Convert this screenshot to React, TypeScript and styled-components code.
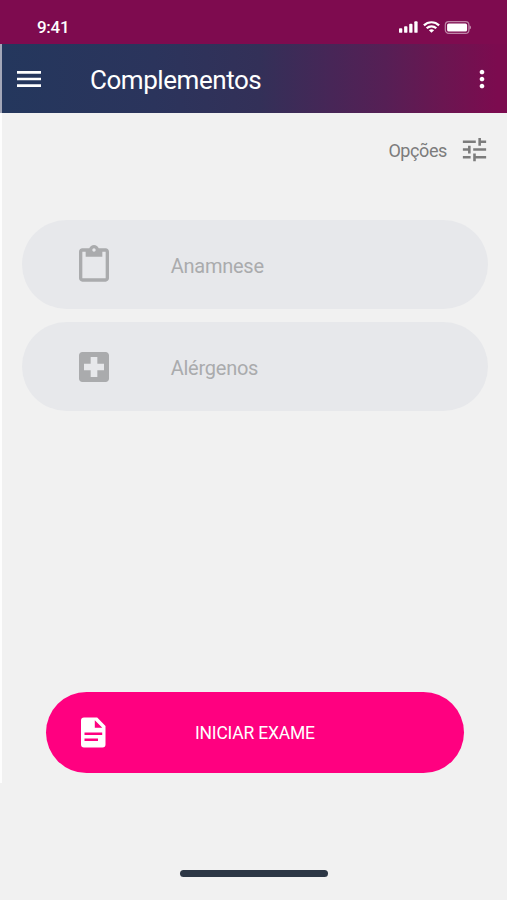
import React from "react";
import styled, { createGlobalStyle } from "styled-components";
import { MdContentPaste, MdLocalHospital, MdMenu, MdMoreVert, MdTune } from "react-icons/md";

const GlobalStyle = createGlobalStyle`
  * { box-sizing: border-box; }
  body { margin: 0; background: #f1f1f1; font-family: Roboto, sans-serif; }
  button { border: 0; padding: 0; background: none; color: inherit; font: inherit; }
  svg { display: block; flex: none; }
`;

const Screen = styled.div`
  display: flex;
  flex-direction: column;
  width: 507px;
  height: 900px;
  background: #f1f1f1;
  overflow: hidden;
`;

const StatusBar = styled.div`
  display: flex;
  align-items: center;
  justify-content: space-between;
  height: 44px;
  padding: 10px 36px 0 37px;
  background: #7e0b4f;
  color: #fff;
`;

const Clock = styled.span`
  font-size: 17px;
  line-height: 20px;
  font-weight: 500;
  letter-spacing: -0.3px;
`;

const StatusIcons = styled.div`
  display: flex;
  align-items: center;
  gap: 4px;
`;

const AppBar = styled.header`
  display: flex;
  align-items: center;
  height: 69px;
  padding: 0 11px;
  border-left: 2px solid #a3a7b8;
  background: linear-gradient(90deg, #24375d 0%, #2b345c 30%, #333058 51%, #472657 65%, #561f55 76%, #6a1651 87%, #7c0b4f 98%);
  color: #fff;
`;

const Title = styled.h1`
  flex: 1;
  margin: 3px 0 0 45px;
  font-size: 26px;
  line-height: 32px;
  font-weight: 400;
  letter-spacing: -0.45px;
`;

const IconButton = styled.button`
  display: flex;
`;

const Content = styled.main`
  display: flex;
  flex-direction: column;
  height: 670px;
  border-left: 2px solid #fdfdfd;
`;

const Options = styled.button`
  display: flex;
  align-items: center;
  align-self: flex-end;
  gap: 12px;
  margin: 21px 17px 0 0;
  color: #7c7c7c;
  font-size: 18px;
  line-height: 22px;
  letter-spacing: -0.4px;
`;

const OptionsLabel = styled.span`
  margin-top: 3px;
`;

const CardList = styled.div`
  display: flex;
  flex-direction: column;
  gap: 13px;
  margin: 55px 19.5px 0 19.7px;
`;

const Card = styled.button`
  display: flex;
  align-items: center;
  height: 89px;
  padding: 0 52px;
  border-radius: 45px;
  background: #e7e8eb;
  color: #aaabad;
  font-size: 20px;
  letter-spacing: -0.25px;
`;

const CardLabel = styled.span`
  margin: 2px 0 0 57px;
`;

const StartButton = styled.button`
  display: flex;
  align-items: center;
  height: 80.5px;
  margin: 281px 43px 0 44px;
  padding: 0 35px;
  border-radius: 41px;
  background: #ff0080;
  color: #fff;
  font-size: 17.5px;
  letter-spacing: -0.2px;
`;

const StartLabel = styled.span`
  margin: 2px 0 0 89px;
`;

const HomeIndicator = styled.div`
  width: 148px;
  height: 7px;
  margin: 86.5px 0 0 180px;
  border-radius: 4px;
  background: #2c3745;
`;

const SignalIcon = () => (
  <svg width="20" height="12" viewBox="0 0 20 12" fill="#fff">
    <rect x="0" y="7.2" width="3.3" height="4.6" rx="0.9" />
    <rect x="5.1" y="5.2" width="3.3" height="6.6" rx="0.9" />
    <rect x="10.2" y="2.8" width="3.3" height="9" rx="0.9" />
    <rect x="15.3" y="0.3" width="3.3" height="11.5" rx="0.9" />
  </svg>
);

const WifiIcon = () => (
  <svg width="17" height="12" viewBox="0 0 17 12" fill="none" stroke="#fff" strokeWidth="2.2">
    <path d="M.9 4.4C5.2.2 11.8.2 16.1 4.4" />
    <path d="M3.7 7.3c2.7-2.7 6.9-2.7 9.6 0" />
    <path d="M8.5 11.8 5.9 9.2c1.4-1.3 3.8-1.3 5.2 0z" fill="#fff" stroke="none" />
  </svg>
);

const BatteryIcon = () => (
  <svg width="27" height="13" viewBox="0 0 27 13">
    <rect x="1.3" y="0.7" width="23.6" height="11.6" rx="3.4" fill="none" stroke="#fff" strokeOpacity="0.5" strokeWidth="1.2" />
    <rect x="3.1" y="2.4" width="20" height="8.2" rx="1.6" fill="#fff" />
    <path d="M25.7 4.6c1.4.6 1.4 3.2 0 3.8z" fill="#fff" fillOpacity="0.7" />
  </svg>
);

const DocumentIcon = () => (
  <svg width="25" height="31" viewBox="0 0 25 31">
    <path
      fill="#fff"
      fillRule="evenodd"
      d="M3 .5h13.2L24.5 9v18.5a3 3 0 0 1-3 3H3a3 3 0 0 1-3-3v-24a3 3 0 0 1 3-3zM13.8 3.2v7.5h7.5zM3.5 15.6v2.5h17.7v-2.5zM3.5 21.5V24H17v-2.5z"
    />
  </svg>
);

export default function App() {
  return (
    <>
      <GlobalStyle />
      <Screen>
        <StatusBar>
          <Clock>9:41</Clock>
          <StatusIcons>
            <SignalIcon />
            <WifiIcon />
            <BatteryIcon />
          </StatusIcons>
        </StatusBar>
        <AppBar>
          <IconButton aria-label="Menu">
            <MdMenu size={32} />
          </IconButton>
          <Title>Complementos</Title>
          <IconButton aria-label="Mais">
            <MdMoreVert size={28} />
          </IconButton>
        </AppBar>
        <Content>
          <Options>
            <OptionsLabel>Opções</OptionsLabel>
            <MdTune size={31} />
          </Options>
          <CardList>
            <Card>
              <MdContentPaste size={40} />
              <CardLabel>Anamnese</CardLabel>
            </Card>
            <Card>
              <MdLocalHospital size={40} />
              <CardLabel>Alérgenos</CardLabel>
            </Card>
          </CardList>
          <StartButton>
            <DocumentIcon />
            <StartLabel>INICIAR EXAME</StartLabel>
          </StartButton>
        </Content>
        <HomeIndicator />
      </Screen>
    </>
  );
}
